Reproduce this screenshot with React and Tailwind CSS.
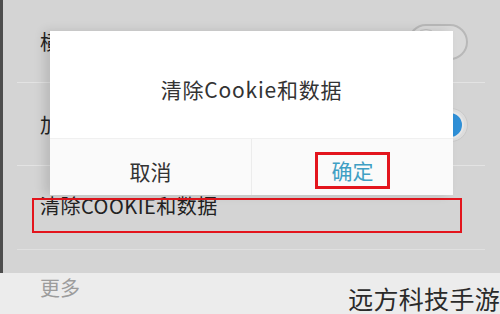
import React from 'react';

const font = { fontFamily: '"Noto Sans CJK SC", "Noto Sans", sans-serif' };

const SettingRow = ({ label, children, last }) => (
  <div className="relative h-[83px] flex items-center pl-[37px] pr-[32px]">
    <span className="text-[20px] leading-none text-[#222]">{label}</span>
    <div className="ml-auto">{children}</div>
    {!last && <div className="absolute left-[14px] right-[15px] bottom-0 h-px bg-[#e3e3e3]" />}
  </div>
);

const Toggle = ({ on }) =>
  on ? (
    <div className="w-[60px] h-[34px] rounded-full border border-[#c9c9c9] bg-[#dcdcdc] flex items-center justify-end pr-[3px]">
      <div className="w-[28px] h-[28px] rounded-full bg-[#2f8fd6] border-2 border-[#e6e6e6]" />
    </div>
  ) : (
    <div className="w-[60px] h-[36px] rounded-full border-2 border-[#b8b8b8] bg-[#d9d9d9] flex items-center pl-[3px]">
      <div className="w-[26px] h-[26px] rounded-full border border-[#bdbdbd] bg-[#e3e3e3]" />
    </div>
  );

const App = () => {
  return (
    <div className="relative w-[500px] h-[314px] overflow-hidden bg-[#d4d4d4]" style={font}>
      <div className="flex h-[273px]">
        <div className="w-[3px] bg-[#4d4d4d]" />
        <div className="flex-1">
          <SettingRow label="横屏浏览">
            <Toggle on={false} />
          </SettingRow>
          <SettingRow label="加载图片">
            <Toggle on />
          </SettingRow>
          <div className="relative h-[84px] pl-[37px] pt-[29px]">
            <span className="text-[20px] leading-none text-[#222] tracking-[0.5px]">清除COOKIE和数据</span>
            <div className="absolute left-[29px] top-[32px] w-[430px] h-[35px] border-2 border-[#e3151d]" />
            <div className="absolute left-[14px] right-[15px] bottom-0 h-px bg-[#e0e0e0]" />
          </div>
        </div>
      </div>

      <div className="flex items-end justify-between h-[41px] bg-[#ececec] pl-[40px]">
        <span className="self-start mt-[5px] text-[20px] leading-none text-[#9c9c9c]">更多</span>
        <span className="mb-[3px] text-[25px] leading-none text-[#2a2a2a] tracking-[0.3px]">远方科技手游</span>
      </div>

      {/* dialog */}
      <div className="absolute left-[50px] top-[31px] w-[403px] h-[164px] bg-white flex flex-col shadow-[-6px_0_10px_rgba(0,0,0,0.12)]">
        <div className="flex-1 flex items-center justify-center pt-[10px]">
          <span className="text-[21px] leading-none text-[#333] tracking-[0.8px]">清除Cookie和数据</span>
        </div>
        <div className="h-[57px] flex bg-[#fafafa] border-t border-[#f0f0f0]">
          <div className="flex-1 flex items-center justify-center pt-[8px] border-r border-[#ececec]">
            <span className="text-[21px] leading-none text-[#333]">取消</span>
          </div>
          <div className="flex-1 flex items-center justify-center">
            <div className="w-[75px] h-[37px] mt-[6px] border-[3px] border-[#e3151d] flex items-center justify-center">
              <span className="text-[21px] leading-none text-[#3f9fc4]">确定</span>
            </div>
          </div>
        </div>
      </div>
    </div>
  );
};

export default App;
